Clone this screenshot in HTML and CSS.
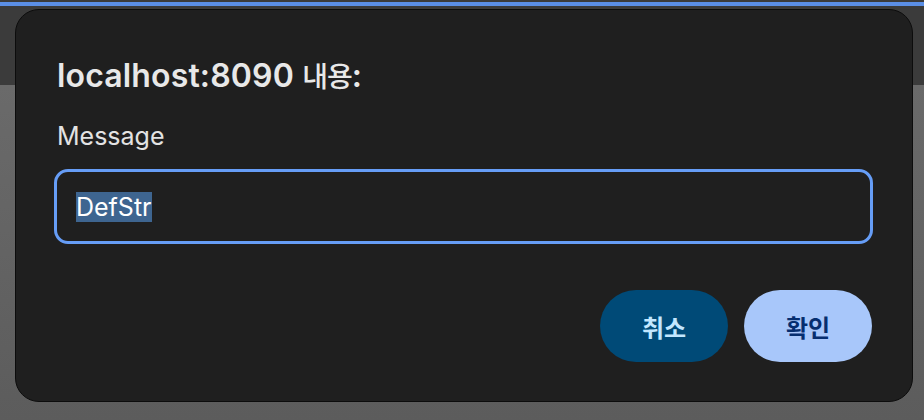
FILE: index.html
```html
<!DOCTYPE html>
<html lang="ko">
<head>
<meta charset="utf-8">
<link rel="stylesheet" href="styles.css">
</head>
<body>
<div class="page">
  <div class="topbar">
    <div class="accent"></div>
  </div>
  <div class="content"></div>
</div>
<div class="dialog">
  <h1 class="title">localhost:8090 <span class="ko">내용</span>:</h1>
  <div class="label">Message</div>
  <div class="field"><span class="sel">DefStr</span></div>
  <div class="actions">
    <button class="btn cancel">취소</button>
    <button class="btn ok">확인</button>
  </div>
</div>
</body>
</html>
```

FILE: styles.css
```css
html, body {
  margin: 0;
  padding: 0;
}
body {
  width: 924px;
  height: 420px;
  overflow: hidden;
  font-family: Inter, "Noto Sans CJK KR", sans-serif;
  position: relative;
}
.page {
  display: flex;
  flex-direction: column;
  height: 420px;
}
.topbar {
  height: 85px;
  background: #3b3b3b;
  padding-top: 2px;
  box-sizing: border-box;
}
.accent {
  height: 4px;
  background: #5b8fe6;
}
.content {
  flex: 1;
  background: linear-gradient(to bottom, #6a6a6a, #5c5c5c);
}
.dialog {
  position: absolute;
  left: 15px;
  top: 9px;
  width: 898px;
  height: 393px;
  box-sizing: border-box;
  background: #1f1f1f;
  border: 1px solid #0c0c0c;
  border-radius: 24px;
  padding: 0 39px 39px 38px;
  display: flex;
  flex-direction: column;
  color: #e6e6e6;
}
.title {
  margin: 46px 0 0 3px;
  font-size: 32px;
  line-height: 38px;
  font-weight: 600;
  color: #e8e8e8;
  letter-spacing: 0.15px;
}
.ko {
  font-family: "Noto Sans CJK KR", sans-serif;
  font-size: 28px;
  font-weight: 500;
  letter-spacing: -1px;
}
.label {
  margin: 26px 0 0 3px;
  font-size: 25px;
  line-height: 30px;
  color: #e3e3e3;
}
.field {
  margin-top: 18px;
  height: 75px;
  box-sizing: border-box;
  border: 3px solid #669df6;
  border-radius: 14px;
  padding: 0 0 0 19px;
  display: flex;
  align-items: center;
}
.sel {
  background: #3e6590;
  color: #ffffff;
  font-size: 25px;
  line-height: 30px;
}
.actions {
  margin-top: auto;
  margin-right: 1px;
  display: flex;
  justify-content: flex-end;
  gap: 16px;
}
.btn {
  width: 128px;
  height: 72px;
  border: 0;
  border-radius: 36px;
  font-family: "Noto Sans CJK KR", sans-serif;
  font-size: 24px;
  font-weight: 700;
  padding: 0;
}
.cancel {
  background: #004a77;
  color: #c2e7ff;
}
.ok {
  background: #a8c7fa;
  color: #062e6f;
}
```
